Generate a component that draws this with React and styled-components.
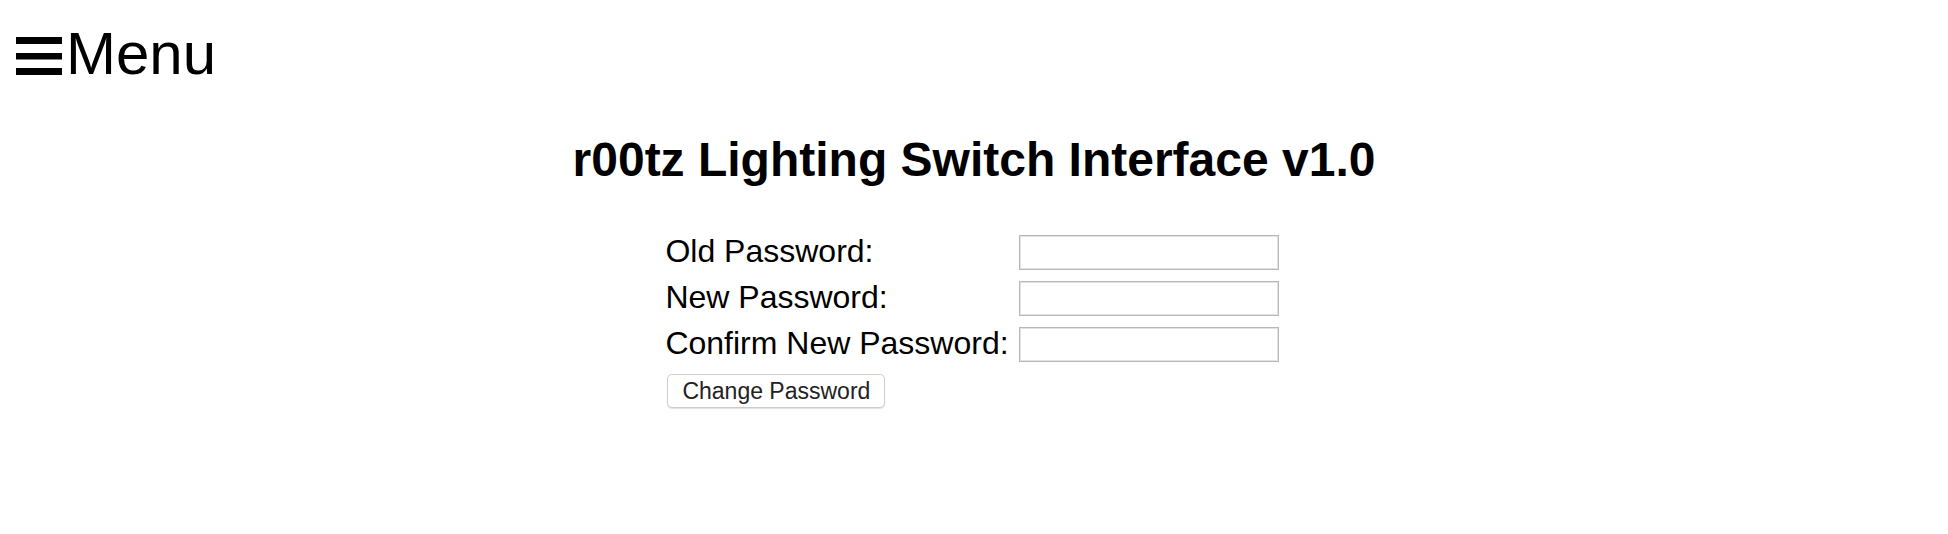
import React from "react";
import styled, { createGlobalStyle } from "styled-components";

const GlobalStyle = createGlobalStyle`
  html, body {
    margin: 0;
    padding: 0;
    background: #ffffff;
  }
  body {
    font-family: "Liberation Sans", Arial, Helvetica, sans-serif;
    color: #000000;
  }
`;

const Page = styled.div`
  display: flex;
  flex-direction: column;
  min-height: 534px;
`;

const Header = styled.header`
  display: flex;
  align-items: flex-start;
  padding: 24px 0 0 16px;
`;

const MenuButton = styled.div`
  display: flex;
  align-items: flex-start;
  gap: 4px;
  cursor: pointer;
`;

const Burger = styled.svg`
  display: block;
  width: 46px;
  height: 38px;
  margin-top: 13px;
`;

const MenuLabel = styled.span`
  font-size: 60px;
  line-height: 60px;
  font-weight: 400;
`;

const Title = styled.h1`
  margin: 48px 0 0;
  font-size: 48px;
  line-height: 56px;
  font-weight: 700;
  text-align: center;
`;

const Form = styled.form`
  display: grid;
  grid-template-columns: auto 260px;
  column-gap: 10px;
  row-gap: 11px;
  justify-content: center;
  margin: 47px 0 0;
  padding-right: 4px;
`;

const Label = styled.label`
  font-size: 32px;
  line-height: 32px;
  align-self: start;
  white-space: nowrap;
`;

const Input = styled.input`
  box-sizing: border-box;
  width: 260px;
  height: 35px;
  margin: 0;
  padding: 2px 6px;
  border: 1px solid #b8b8b8;
  box-shadow: inset 0 0 0 1px #e2e2e2;
  background: #ffffff;
  font-family: inherit;
  font-size: 20px;
  outline: none;
`;

const SubmitButton = styled.button`
  grid-column: 1;
  justify-self: start;
  box-sizing: border-box;
  width: 218px;
  height: 34px;
  margin: 1px 0 0 2px;
  padding: 0;
  border: 1px solid #cdcdcd;
  border-radius: 5px;
  background: #ffffff;
  box-shadow: 0 1px 1px rgba(0, 0, 0, 0.12);
  color: #222222;
  font-family: "Liberation Sans", Arial, Helvetica, sans-serif;
  font-size: 23px;
  line-height: 1;
  text-align: center;
  cursor: pointer;
`;

const fields = [
  { id: "old", label: "Old Password:" },
  { id: "new", label: "New Password:" },
  { id: "confirm", label: "Confirm New Password:" },
];

export default function App() {
  return (
    <Page>
      <GlobalStyle />
      <Header>
        <MenuButton>
          <Burger viewBox="0 0 46 38" aria-hidden="true">
            <rect x="0" y="0" width="46" height="7" fill="#000" />
            <rect x="0" y="16" width="46" height="6.5" fill="#000" />
            <rect x="0" y="31" width="46" height="7" fill="#000" />
          </Burger>
          <MenuLabel>Menu</MenuLabel>
        </MenuButton>
      </Header>
      <Title>r00tz Lighting Switch Interface v1.0</Title>
      <Form onSubmit={(e) => e.preventDefault()}>
        {fields.map((f) => (
          <React.Fragment key={f.id}>
            <Label htmlFor={f.id}>{f.label}</Label>
            <Input id={f.id} type="password" />
          </React.Fragment>
        ))}
        <SubmitButton type="submit">Change Password</SubmitButton>
      </Form>
    </Page>
  );
}
